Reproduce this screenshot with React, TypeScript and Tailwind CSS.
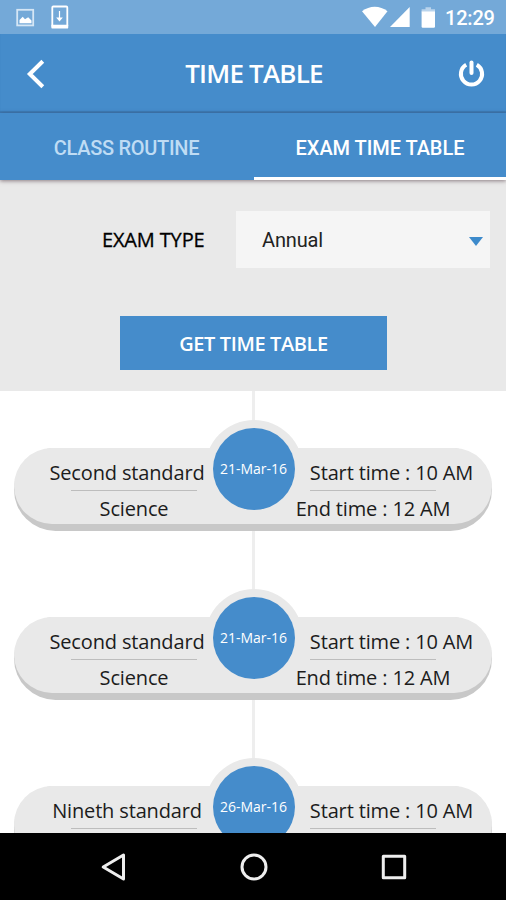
type Exam = { standard: string; date: string; start: string; subject?: string; end?: string };

const exams: Exam[] = [
  { standard: "Second standard", subject: "Science", date: "21-Mar-16", start: "10 AM", end: "12 AM" },
  { standard: "Second standard", subject: "Science", date: "21-Mar-16", start: "10 AM", end: "12 AM" },
  { standard: "Nineth standard", date: "26-Mar-16", start: "10 AM" },
];

function StatusBar() {
  return (
    <div className="flex h-[34px] shrink-0 items-start bg-[#74a9d8] pl-4 pr-[10px] font-['Roboto',sans-serif] text-white">
      <svg className="mt-[8px]" width="19" height="19" viewBox="0 0 19 19" fill="none">
        <rect x="1.2" y="1.8" width="16" height="15.6" stroke="#d5e6f5" strokeWidth="1.8" />
        <path d="M3.5 15.2V12l3.2-3.3 2.3 2.6 3.2-2 3.3 3.2v2.7z" fill="#fff" />
      </svg>
      <svg className="ml-4 mt-[5px]" width="18" height="25" viewBox="0 0 18 25" fill="none">
        <rect x="1.3" y="1.5" width="15" height="20.5" rx="1" stroke="#fff" strokeWidth="1.8" />
        <path d="M0.4 19.8h16.8v2.6a1.2 1.2 0 0 1-1.2 1.2H1.6a1.2 1.2 0 0 1-1.2-1.2z" fill="#fff" />
        <path d="M8.5 6v8.5M6.4 13h4.2L8.5 15.6z" stroke="#fff" strokeWidth="1.2" fill="#fff" />
      </svg>
      <svg className="ml-auto mt-[6px]" width="26" height="22" viewBox="0 0 26 22" fill="#fff">
        <path d="M0 5.2C7.5-.8 18-.8 25.5 5.2L13 21z" />
      </svg>
      <svg className="ml-[2px] mt-[7px]" width="20" height="20" viewBox="0 0 20 20" fill="#fff">
        <path d="M19.7 0v20H0z" />
      </svg>
      <svg className="ml-[11px] mt-[7px]" width="15" height="21" viewBox="0 0 15 21" fill="#fff">
        <path d="M4.5.3h5.5v2H14v3H.6v-3h3.9z" opacity=".5" />
        <path d="M.6 4.6H14v15a1.2 1.2 0 0 1-1.2 1.2H1.8A1.2 1.2 0 0 1 .6 19.6z" />
      </svg>
      <span className="ml-[9px] mt-[5px] w-[51px] whitespace-nowrap text-[20px] font-medium leading-[26px] tracking-[-0.2px]">12:29</span>
    </div>
  );
}

function Header() {
  return (
    <header className="flex h-[79px] shrink-0 items-center justify-between bg-[#458ccb] pl-[26px] pr-[21px] shadow-[inset_0_-2px_1px_#3b7ab5]">
      <svg width="20" height="30" viewBox="0 0 20 30" fill="none" stroke="#fff" strokeWidth="4">
        <path d="M16.8 2.2 3.8 15l13 12.8" />
      </svg>
      <h1 className="mb-[2px] ml-[4px] whitespace-nowrap text-[26px] font-semibold leading-8 tracking-[-0.8px] text-white">TIME TABLE</h1>
      <svg width="27" height="28" viewBox="0 0 27 28" fill="none" stroke="#fff" strokeWidth="4">
        <path d="M8.2 4.8A10.6 10.6 0 1 0 18.8 4.8" />
        <path d="M13.5 2.5V13" strokeLinecap="round" />
      </svg>
    </header>
  );
}

function Tabs() {
  return (
    <nav className="z-10 grid h-[67px] shrink-0 grid-cols-2 bg-[#458ccb] font-['Roboto',sans-serif] text-[20px] font-medium shadow-[0_1px_4px_rgba(60,35,45,0.55)]">
      <div className="flex items-center justify-center pt-[3px] text-[#bfdcf4]">
        <span className="whitespace-nowrap tracking-[-0.3px]">CLASS ROUTINE</span>
      </div>
      <div className="ml-px flex items-center justify-center border-b-[3px] border-white pt-[6px] text-white">
        <span className="whitespace-nowrap tracking-[-0.05px]">EXAM TIME TABLE</span>
      </div>
    </nav>
  );
}

function ExamForm() {
  return (
    <section className="flex h-[211px] shrink-0 flex-col bg-[#e9e9e9] pt-[31px]">
      <div className="flex items-center pl-[102px]">
        <label className="w-[134px] whitespace-nowrap text-[20px] tracking-[-0.15px] text-black [-webkit-text-stroke:0.3px_black]">EXAM TYPE</label>
        <div className="flex h-[57px] w-[254px] items-center justify-between bg-[#f5f5f5] pl-[26px] pr-[7px] font-['Roboto',sans-serif] text-[20px] tracking-[-0.15px] text-[#222]">
          <span>Annual</span>
          <svg className="mt-[3px]" width="14" height="9" viewBox="0 0 14 9" fill="#3d8acb">
            <path d="M0 0h14L7 9z" />
          </svg>
        </div>
      </div>
      <button className="ml-[120px] mt-[48px] h-[54px] w-[267px] whitespace-nowrap bg-[#458ccb] pt-[2px] text-[20px] font-semibold tracking-[-0.4px] text-white">
        GET TIME TABLE
      </button>
    </section>
  );
}

function ExamCard({ exam }: { exam: Exam }) {
  return (
    <article className="relative h-[169px] shrink-0 pl-[14px] pt-[57px]">
      <div className="absolute left-[252px] top-0 h-full w-[3px] bg-[#eee]" />
      <div className="absolute left-[205px] top-[29px] size-[98px] rounded-full bg-[#e9e9e9]" />
      <div className="relative flex h-[83px] w-[478px] rounded-[42px] bg-[#c8c8c8] pb-[7px]">
        <div className="flex h-[76px] w-full justify-between rounded-[38px] bg-[#e9e9e9] pl-[57px] pr-[56px] text-[20px] leading-[28px] tracking-[-0.15px] text-[#1c1c1c]">
          <div className="flex w-[126px] flex-col items-center whitespace-nowrap pt-[11px]">
            <span className="-ml-[14px]">{exam.standard}</span>
            <div className="mt-[3px] h-px w-full shrink-0 bg-[#bdbdbd]" />
            {exam.subject && <span className="mt-[4px]">{exam.subject}</span>}
          </div>
          <div className="flex w-[126px] flex-col items-center whitespace-nowrap pt-[11px]">
            <span className="ml-[37px]">Start time : {exam.start}</span>
            <div className="mt-[3px] h-px w-full shrink-0 bg-[#bdbdbd]" />
            {exam.end && <span className="mt-[4px]">End time : {exam.end}</span>}
          </div>
        </div>
      </div>
      <div className="absolute left-[213px] top-[37px] flex size-[82px] items-center justify-center rounded-full bg-[#458ccb] pb-[2px] pr-px text-[14px] font-medium text-white">
        <span className="whitespace-nowrap">{exam.date}</span>
      </div>
    </article>
  );
}

function NavBar() {
  return (
    <footer className="z-10 flex h-[67px] shrink-0 items-center justify-between bg-black pl-[100px] pr-[98px]">
      <svg width="28" height="30" viewBox="0 0 28 30" fill="none" stroke="#eee" strokeWidth="3" strokeLinejoin="round">
        <path d="M23.5 3v24L3.2 15z" />
      </svg>
      <svg width="28" height="28" viewBox="0 0 28 28" fill="none" stroke="#eee" strokeWidth="3">
        <circle cx="14" cy="14" r="12" />
      </svg>
      <svg width="28" height="28" viewBox="0 0 28 28" fill="none" stroke="#eee" strokeWidth="3" strokeLinejoin="round">
        <rect x="3.3" y="3.3" width="21.4" height="21.4" />
      </svg>
    </footer>
  );
}

export default function App() {
  return (
    <div className="flex h-[900px] w-[506px] flex-col overflow-hidden bg-white font-['Open_Sans',sans-serif]">
      <StatusBar />
      <Header />
      <Tabs />
      <ExamForm />
      <main className="flex min-h-0 flex-1 flex-col overflow-hidden">
        {exams.map((exam, i) => (
          <ExamCard key={i} exam={exam} />
        ))}
      </main>
      <NavBar />
    </div>
  );
}
